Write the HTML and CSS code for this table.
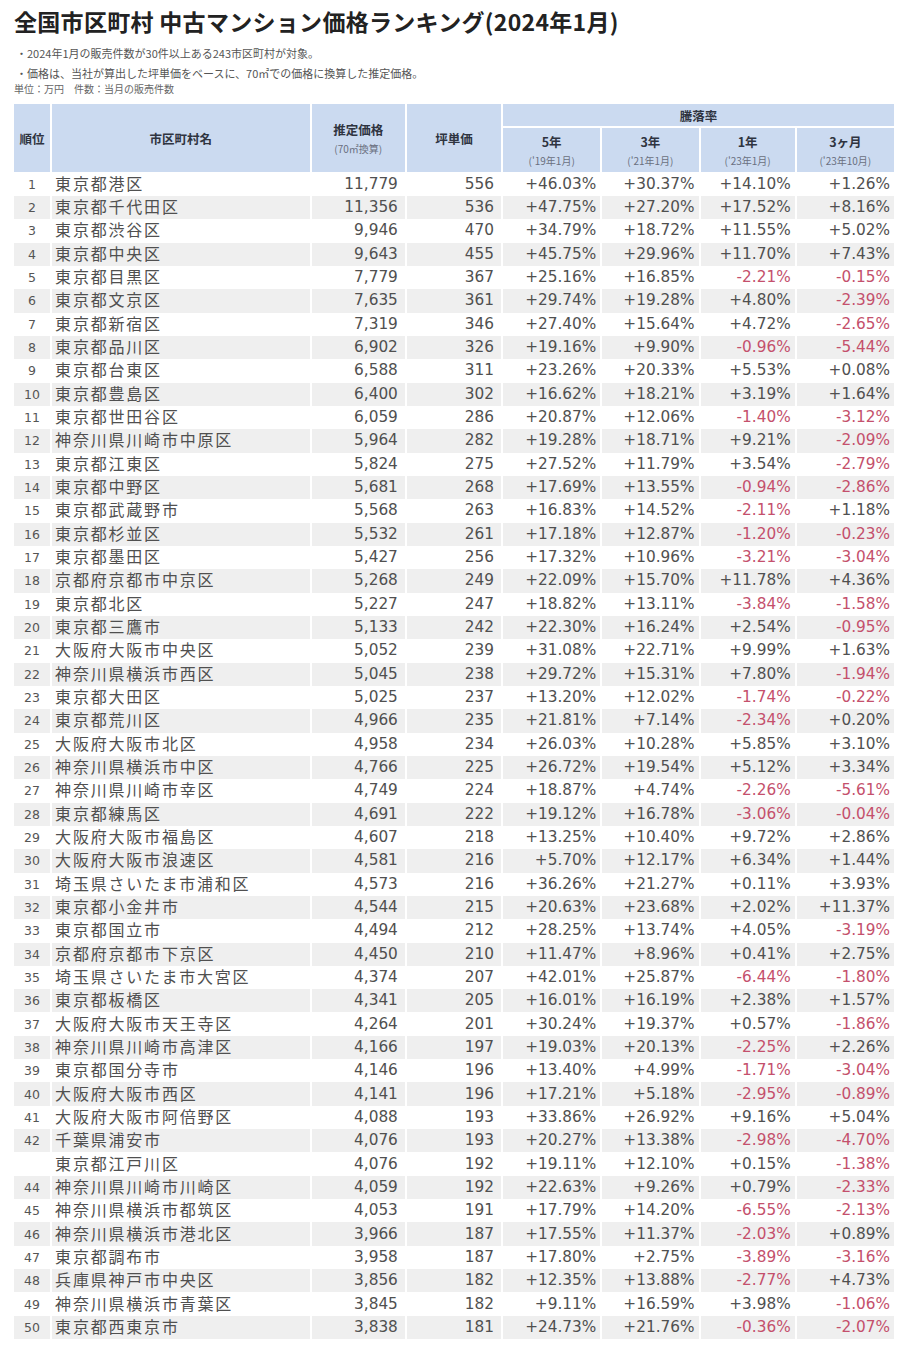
FILE: index.html
```html
<!DOCTYPE html>
<html lang="ja">
<head>
<meta charset="utf-8">
<title>全国市区町村 中古マンション価格ランキング(2024年1月)</title>
<link rel="stylesheet" href="styles.css">
</head>
<body>
<div class="page">
<h1 class="title">全国市区町村 中古マンション価格ランキング(2024年1月)</h1>
<p class="note">・2024年1月の販売件数が30件以上ある243市区町村が対象。</p>
<p class="note">・価格は、当社が算出した坪単価をベースに、70㎡での価格に換算した推定価格。</p>
<p class="unit">単位：万円　件数：当月の販売件数</p>
<table class="rank">
<colgroup>
<col class="c-rank"><col class="c-name"><col class="c-price"><col class="c-tsubo">
<col class="c-5"><col class="c-3"><col class="c-1"><col class="c-3m">
</colgroup>
<thead>
<tr class="h1">
<th rowspan="2">順位</th>
<th rowspan="2">市区町村名</th>
<th rowspan="2"><span class="hm">推定価格</span><span class="hs">(70㎡換算)</span></th>
<th rowspan="2">坪単価</th>
<th colspan="4" class="group">騰落率</th>
</tr>
<tr class="h2">
<th><span class="hm">5年</span><span class="hs">('19年1月)</span></th>
<th><span class="hm">3年</span><span class="hs">('21年1月)</span></th>
<th><span class="hm">1年</span><span class="hs">('23年1月)</span></th>
<th><span class="hm">3ヶ月</span><span class="hs">('23年10月)</span></th>
</tr>
</thead>
<tbody>
<tr><td>1</td><td>東京都港区</td><td>11,779</td><td>556</td><td>+46.03%</td><td>+30.37%</td><td>+14.10%</td><td>+1.26%</td></tr>
<tr><td>2</td><td>東京都千代田区</td><td>11,356</td><td>536</td><td>+47.75%</td><td>+27.20%</td><td>+17.52%</td><td>+8.16%</td></tr>
<tr><td>3</td><td>東京都渋谷区</td><td>9,946</td><td>470</td><td>+34.79%</td><td>+18.72%</td><td>+11.55%</td><td>+5.02%</td></tr>
<tr><td>4</td><td>東京都中央区</td><td>9,643</td><td>455</td><td>+45.75%</td><td>+29.96%</td><td>+11.70%</td><td>+7.43%</td></tr>
<tr><td>5</td><td>東京都目黒区</td><td>7,779</td><td>367</td><td>+25.16%</td><td>+16.85%</td><td class="neg">-2.21%</td><td class="neg">-0.15%</td></tr>
<tr><td>6</td><td>東京都文京区</td><td>7,635</td><td>361</td><td>+29.74%</td><td>+19.28%</td><td>+4.80%</td><td class="neg">-2.39%</td></tr>
<tr><td>7</td><td>東京都新宿区</td><td>7,319</td><td>346</td><td>+27.40%</td><td>+15.64%</td><td>+4.72%</td><td class="neg">-2.65%</td></tr>
<tr><td>8</td><td>東京都品川区</td><td>6,902</td><td>326</td><td>+19.16%</td><td>+9.90%</td><td class="neg">-0.96%</td><td class="neg">-5.44%</td></tr>
<tr><td>9</td><td>東京都台東区</td><td>6,588</td><td>311</td><td>+23.26%</td><td>+20.33%</td><td>+5.53%</td><td>+0.08%</td></tr>
<tr><td>10</td><td>東京都豊島区</td><td>6,400</td><td>302</td><td>+16.62%</td><td>+18.21%</td><td>+3.19%</td><td>+1.64%</td></tr>
<tr><td>11</td><td>東京都世田谷区</td><td>6,059</td><td>286</td><td>+20.87%</td><td>+12.06%</td><td class="neg">-1.40%</td><td class="neg">-3.12%</td></tr>
<tr><td>12</td><td>神奈川県川崎市中原区</td><td>5,964</td><td>282</td><td>+19.28%</td><td>+18.71%</td><td>+9.21%</td><td class="neg">-2.09%</td></tr>
<tr><td>13</td><td>東京都江東区</td><td>5,824</td><td>275</td><td>+27.52%</td><td>+11.79%</td><td>+3.54%</td><td class="neg">-2.79%</td></tr>
<tr><td>14</td><td>東京都中野区</td><td>5,681</td><td>268</td><td>+17.69%</td><td>+13.55%</td><td class="neg">-0.94%</td><td class="neg">-2.86%</td></tr>
<tr><td>15</td><td>東京都武蔵野市</td><td>5,568</td><td>263</td><td>+16.83%</td><td>+14.52%</td><td class="neg">-2.11%</td><td>+1.18%</td></tr>
<tr><td>16</td><td>東京都杉並区</td><td>5,532</td><td>261</td><td>+17.18%</td><td>+12.87%</td><td class="neg">-1.20%</td><td class="neg">-0.23%</td></tr>
<tr><td>17</td><td>東京都墨田区</td><td>5,427</td><td>256</td><td>+17.32%</td><td>+10.96%</td><td class="neg">-3.21%</td><td class="neg">-3.04%</td></tr>
<tr><td>18</td><td>京都府京都市中京区</td><td>5,268</td><td>249</td><td>+22.09%</td><td>+15.70%</td><td>+11.78%</td><td>+4.36%</td></tr>
<tr><td>19</td><td>東京都北区</td><td>5,227</td><td>247</td><td>+18.82%</td><td>+13.11%</td><td class="neg">-3.84%</td><td class="neg">-1.58%</td></tr>
<tr><td>20</td><td>東京都三鷹市</td><td>5,133</td><td>242</td><td>+22.30%</td><td>+16.24%</td><td>+2.54%</td><td class="neg">-0.95%</td></tr>
<tr><td>21</td><td>大阪府大阪市中央区</td><td>5,052</td><td>239</td><td>+31.08%</td><td>+22.71%</td><td>+9.99%</td><td>+1.63%</td></tr>
<tr><td>22</td><td>神奈川県横浜市西区</td><td>5,045</td><td>238</td><td>+29.72%</td><td>+15.31%</td><td>+7.80%</td><td class="neg">-1.94%</td></tr>
<tr><td>23</td><td>東京都大田区</td><td>5,025</td><td>237</td><td>+13.20%</td><td>+12.02%</td><td class="neg">-1.74%</td><td class="neg">-0.22%</td></tr>
<tr><td>24</td><td>東京都荒川区</td><td>4,966</td><td>235</td><td>+21.81%</td><td>+7.14%</td><td class="neg">-2.34%</td><td>+0.20%</td></tr>
<tr><td>25</td><td>大阪府大阪市北区</td><td>4,958</td><td>234</td><td>+26.03%</td><td>+10.28%</td><td>+5.85%</td><td>+3.10%</td></tr>
<tr><td>26</td><td>神奈川県横浜市中区</td><td>4,766</td><td>225</td><td>+26.72%</td><td>+19.54%</td><td>+5.12%</td><td>+3.34%</td></tr>
<tr><td>27</td><td>神奈川県川崎市幸区</td><td>4,749</td><td>224</td><td>+18.87%</td><td>+4.74%</td><td class="neg">-2.26%</td><td class="neg">-5.61%</td></tr>
<tr><td>28</td><td>東京都練馬区</td><td>4,691</td><td>222</td><td>+19.12%</td><td>+16.78%</td><td class="neg">-3.06%</td><td class="neg">-0.04%</td></tr>
<tr><td>29</td><td>大阪府大阪市福島区</td><td>4,607</td><td>218</td><td>+13.25%</td><td>+10.40%</td><td>+9.72%</td><td>+2.86%</td></tr>
<tr><td>30</td><td>大阪府大阪市浪速区</td><td>4,581</td><td>216</td><td>+5.70%</td><td>+12.17%</td><td>+6.34%</td><td>+1.44%</td></tr>
<tr><td>31</td><td>埼玉県さいたま市浦和区</td><td>4,573</td><td>216</td><td>+36.26%</td><td>+21.27%</td><td>+0.11%</td><td>+3.93%</td></tr>
<tr><td>32</td><td>東京都小金井市</td><td>4,544</td><td>215</td><td>+20.63%</td><td>+23.68%</td><td>+2.02%</td><td>+11.37%</td></tr>
<tr><td>33</td><td>東京都国立市</td><td>4,494</td><td>212</td><td>+28.25%</td><td>+13.74%</td><td>+4.05%</td><td class="neg">-3.19%</td></tr>
<tr><td>34</td><td>京都府京都市下京区</td><td>4,450</td><td>210</td><td>+11.47%</td><td>+8.96%</td><td>+0.41%</td><td>+2.75%</td></tr>
<tr><td>35</td><td>埼玉県さいたま市大宮区</td><td>4,374</td><td>207</td><td>+42.01%</td><td>+25.87%</td><td class="neg">-6.44%</td><td class="neg">-1.80%</td></tr>
<tr><td>36</td><td>東京都板橋区</td><td>4,341</td><td>205</td><td>+16.01%</td><td>+16.19%</td><td>+2.38%</td><td>+1.57%</td></tr>
<tr><td>37</td><td>大阪府大阪市天王寺区</td><td>4,264</td><td>201</td><td>+30.24%</td><td>+19.37%</td><td>+0.57%</td><td class="neg">-1.86%</td></tr>
<tr><td>38</td><td>神奈川県川崎市高津区</td><td>4,166</td><td>197</td><td>+19.03%</td><td>+20.13%</td><td class="neg">-2.25%</td><td>+2.26%</td></tr>
<tr><td>39</td><td>東京都国分寺市</td><td>4,146</td><td>196</td><td>+13.40%</td><td>+4.99%</td><td class="neg">-1.71%</td><td class="neg">-3.04%</td></tr>
<tr><td>40</td><td>大阪府大阪市西区</td><td>4,141</td><td>196</td><td>+17.21%</td><td>+5.18%</td><td class="neg">-2.95%</td><td class="neg">-0.89%</td></tr>
<tr><td>41</td><td>大阪府大阪市阿倍野区</td><td>4,088</td><td>193</td><td>+33.86%</td><td>+26.92%</td><td>+9.16%</td><td>+5.04%</td></tr>
<tr><td>42</td><td>千葉県浦安市</td><td>4,076</td><td>193</td><td>+20.27%</td><td>+13.38%</td><td class="neg">-2.98%</td><td class="neg">-4.70%</td></tr>
<tr><td></td><td>東京都江戸川区</td><td>4,076</td><td>192</td><td>+19.11%</td><td>+12.10%</td><td>+0.15%</td><td class="neg">-1.38%</td></tr>
<tr><td>44</td><td>神奈川県川崎市川崎区</td><td>4,059</td><td>192</td><td>+22.63%</td><td>+9.26%</td><td>+0.79%</td><td class="neg">-2.33%</td></tr>
<tr><td>45</td><td>神奈川県横浜市都筑区</td><td>4,053</td><td>191</td><td>+17.79%</td><td>+14.20%</td><td class="neg">-6.55%</td><td class="neg">-2.13%</td></tr>
<tr><td>46</td><td>神奈川県横浜市港北区</td><td>3,966</td><td>187</td><td>+17.55%</td><td>+11.37%</td><td class="neg">-2.03%</td><td>+0.89%</td></tr>
<tr><td>47</td><td>東京都調布市</td><td>3,958</td><td>187</td><td>+17.80%</td><td>+2.75%</td><td class="neg">-3.89%</td><td class="neg">-3.16%</td></tr>
<tr><td>48</td><td>兵庫県神戸市中央区</td><td>3,856</td><td>182</td><td>+12.35%</td><td>+13.88%</td><td class="neg">-2.77%</td><td>+4.73%</td></tr>
<tr><td>49</td><td>神奈川県横浜市青葉区</td><td>3,845</td><td>182</td><td>+9.11%</td><td>+16.59%</td><td>+3.98%</td><td class="neg">-1.06%</td></tr>
<tr><td>50</td><td>東京都西東京市</td><td>3,838</td><td>181</td><td>+24.73%</td><td>+21.76%</td><td class="neg">-0.36%</td><td class="neg">-2.07%</td></tr>
</tbody>
</table>
</div>
</body>
</html>
```
FILE: styles.css
```css
* { box-sizing: border-box; }
html, body { margin: 0; padding: 0; background: #fff; }
body {
  font-family: "DejaVu Sans", "Noto Sans CJK JP", sans-serif;
  color: #505050;
}
.page { padding: 6px 0 0 12px; width: 900px; }
.title {
  margin: 0 0 0 2px;
  font-family: "Noto Sans CJK JP", sans-serif;
  font-weight: 700;
  font-size: 23px;
  line-height: 30px;
  color: #222;
  letter-spacing: 0.3px;
}
.note {
  margin: 0 0 0 4px;
  font-family: "Noto Sans CJK JP", sans-serif;
  font-size: 11px;
  line-height: 20px;
  color: #555;
}
.note:first-of-type { margin-top: 7px; }
.unit {
  margin: -1px 0 0 2px;
  font-family: "Noto Sans CJK JP", sans-serif;
  font-size: 10px;
  line-height: 14px;
  color: #666;
}
.rank {
  margin-top: 8px;
  border-collapse: separate;
  border-spacing: 2px 0;
  table-layout: fixed;
  width: 884px;
  margin-left: 0;
}
.c-rank { width: 36px; }
.c-name { width: 257px; }
.c-price { width: 93px; }
.c-tsubo { width: 94px; }
.c-5 { width: 97px; }
.c-3 { width: 96px; }
.c-1 { width: 94px; }
.c-3m { width: 97px; }

.rank th {
  background: #cbdaf0;
  font-family: "Noto Sans CJK JP", sans-serif;
  font-weight: 700;
  font-size: 12.5px;
  color: #2f3440;
  padding: 0;
  vertical-align: middle;
  text-align: center;
}
.rank .h1 th { height: 24px; }
.rank .h1 th.group { border-bottom: 2px solid #fff; height: 24px; }
.rank .h2 th { height: 44px; }
.hm { display: block; line-height: 20px; }
.hs {
  display: block;
  font-weight: 400;
  font-size: 10px;
  line-height: 16px;
  color: #6a7080;
}
.rank th .hs { margin-top: 1px; }

.rank td {
  height: 23.34px;
  padding: 0 5px 0 0;
  font-size: 15.3px;
  line-height: 23px;
  text-align: right;
  white-space: nowrap;
}
.rank tbody tr:nth-child(even) td { background: #efefef; }
.rank td:nth-child(1) {
  text-align: center;
  font-size: 12.5px;
  padding: 0;
  color: #555;
}
.rank td:nth-child(2) {
  text-align: left;
  padding: 0 0 2px 3px;
  line-height: 21px;
  font-family: "Noto Sans CJK JP", sans-serif;
  font-size: 16px;
  letter-spacing: 1.8px;
}
.rank td:nth-child(3), .rank td:nth-child(4) { padding-right: 7px; }
.rank td:nth-child(n+5) { padding-right: 4px; }
.rank td.neg { color: #c4506c; }
.rank tbody tr:first-child td { border-top: 1.5px solid #fff; }
```
